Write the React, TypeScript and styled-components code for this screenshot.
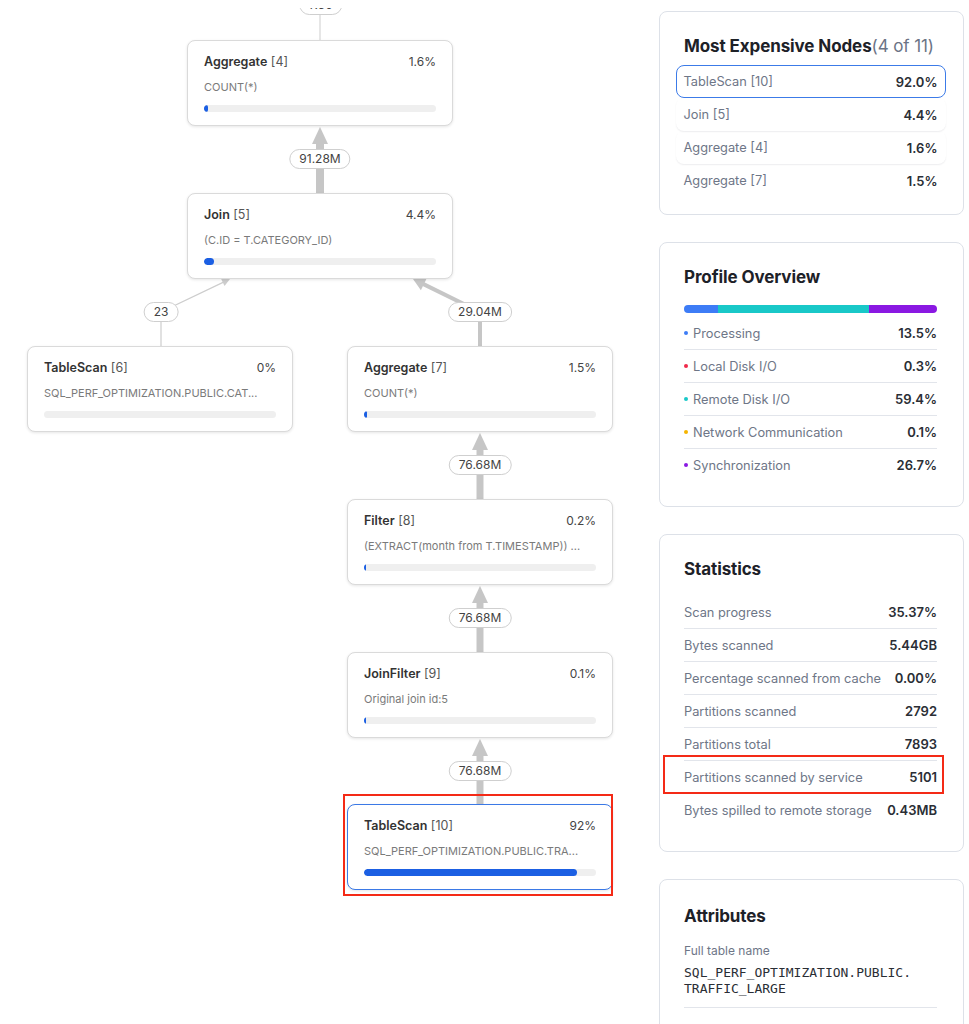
import React from "react";
import styled, { createGlobalStyle } from "styled-components";

const Global = createGlobalStyle`
  html, body { margin: 0; padding: 0; background: #ffffff; }
  body {
    font-family: Inter, "Noto Sans", "Liberation Sans", sans-serif;
    overflow: hidden;
    -webkit-font-smoothing: antialiased;
  }
  #root { width: 969px; height: 1024px; }
`;

const Page = styled.div`
  display: flex;
  width: 969px;
  height: 1024px;
  overflow: hidden;
`;

/* ---------------- Graph canvas ---------------- */

const Canvas = styled.div`
  position: relative;
  flex: 0 0 659px;
  height: 1024px;
  overflow: hidden;
`;

const TopCover = styled.div`
  position: absolute;
  left: 0;
  top: 0;
  width: 100%;
  height: 8px;
  background: #ffffff;
  z-index: 2;
`;

const Edges = styled.svg`
  position: absolute;
  left: 0;
  top: 0;
`;

const NodeCard = styled.div<{ $selected?: boolean }>`
  position: absolute;
  width: 266px;
  box-sizing: border-box;
  background: #ffffff;
  border-radius: 8px;
  border: 1.5px solid ${(p) => (p.$selected ? "#3b79e6" : "#dadada")};
  box-shadow: 0 1px 3px rgba(0, 0, 0, 0.1);
  padding: 13px 16px 13px;
`;

const NodeHead = styled.div`
  display: flex;
  justify-content: space-between;
  align-items: center;
  font-size: 12.5px;
  line-height: 16px;
`;

const NodeName = styled.span`
  font-weight: 600;
  color: #333333;
`;

const NodeId = styled.span`
  font-weight: 400;
  color: #555555;
`;

const NodePct = styled.span`
  color: #444444;
  font-size: 12px;
`;

const NodeDesc = styled.div`
  margin-top: 9px;
  font-size: 11px;
  line-height: 16px;
  color: #7a7a7a;
  white-space: nowrap;
  overflow: hidden;
`;

const Track = styled.div`
  margin-top: 10px;
  height: 7px;
  border-radius: 4px;
  background: #efefef;
  overflow: hidden;
`;

const Fill = styled.div`
  height: 100%;
  border-radius: 4px;
  background: #1b5fe3;
`;

const Pill = styled.div`
  position: absolute;
  transform: translate(-50%, -50%);
  height: 20px;
  box-sizing: border-box;
  padding: 0 9px;
  border: 1px solid #cfcfcf;
  border-radius: 10px;
  background: #ffffff;
  font-size: 12px;
  line-height: 18px;
  color: #444444;
  white-space: nowrap;
`;

const Annotation = styled.div`
  position: absolute;
  box-sizing: border-box;
  border: 2px solid #f42a16;
  pointer-events: none;
`;

/* ---------------- Sidebar ---------------- */

const Sidebar = styled.div`
  flex: 0 0 305px;
  display: flex;
  flex-direction: column;
  gap: 27px;
  padding-top: 11px;
`;

const Card = styled.section<{ $pb: number; $pt?: number }>`
  flex: none;
  box-sizing: border-box;
  border: 1px solid #dde1e8;
  border-radius: 8px;
  padding: ${(p) => p.$pt ?? 23}px 26px ${(p) => p.$pb}px 24px;
`;

const CardTitle = styled.h2<{ $mb: number }>`
  margin: 0 0 ${(p) => p.$mb}px;
  font-size: 17px;
  line-height: 22px;
  font-weight: 700;
  color: #1d2128;
  letter-spacing: -0.1px;
`;

const Muted = styled.span`
  font-weight: 400;
  color: #6b7385;
`;

const NodeRow = styled.div<{ $selected?: boolean }>`
  display: flex;
  justify-content: space-between;
  align-items: center;
  height: 33px;
  box-sizing: border-box;
  margin: 0 -9px 0 -8px;
  padding: 0 7.5px 0 6.5px;
  border-radius: 8px;
  border: 1.5px solid ${(p) => (p.$selected ? "#3c7be8" : "transparent")};
  box-shadow: ${(p) => (p.$selected ? "none" : "0 1px 1.5px rgba(20, 30, 50, 0.08)")};
  &:last-child { box-shadow: none; }
`;

const Label = styled.span`
  color: #6e7687;
  font-size: 12.8px;
  display: inline-flex;
  align-items: center;
  gap: 5px;
`;

const Value = styled.span`
  color: #2a2e35;
  font-size: 13px;
  font-weight: 600;
`;

const ProfileBar = styled.div`
  display: flex;
  height: 8px;
  border-radius: 4px;
  overflow: hidden;
  margin-bottom: 4px;
`;

const Segment = styled.div<{ $color: string }>`
  height: 100%;
  background: ${(p) => p.$color};
`;

const Dot = styled.span<{ $color: string }>`
  width: 4px;
  height: 4px;
  border-radius: 50%;
  background: ${(p) => p.$color};
  flex: none;
`;

const StatRow = styled.div`
  position: relative;
  display: flex;
  justify-content: space-between;
  align-items: center;
  height: 33px;
  box-sizing: border-box;
  border-bottom: 1px solid #e2e5eb;
  &:last-child { border-bottom-color: transparent; }
`;

const RowMark = styled.div`
  position: absolute;
  left: -21px;
  right: -7px;
  top: -6px;
  bottom: -1px;
  border: 2px solid #f42a16;
  pointer-events: none;
`;

const AttrBlock = styled.div`
  padding-bottom: 10px;
  border-bottom: 1px solid #e2e5eb;
  margin-top: 16px;
`;

const AttrLabel = styled.div`
  font-size: 12px;
  line-height: 16px;
  color: #6e7687;
`;

const AttrValue = styled.div`
  margin-top: 6px;
  font-family: "DejaVu Sans Mono", "Liberation Mono", monospace;
  font-size: 13px;
  line-height: 16px;
  color: #2a2e35;
  white-space: pre;
`;

/* ---------------- Data ---------------- */

type GNode = {
  name: string;
  id: number;
  pct: string;
  v: number;
  desc: string;
  x: number;
  y: number;
  selected?: boolean;
};

const nodes: GNode[] = [
  { name: "Aggregate", id: 4, pct: "1.6%", v: 1.6, desc: "COUNT(*)", x: 187, y: 40 },
  { name: "Join", id: 5, pct: "4.4%", v: 4.4, desc: "(C.ID = T.CATEGORY_ID)", x: 187, y: 193 },
  { name: "TableScan", id: 6, pct: "0%", v: 0, desc: "SQL_PERF_OPTIMIZATION.PUBLIC.CAT...", x: 27, y: 346 },
  { name: "Aggregate", id: 7, pct: "1.5%", v: 1.5, desc: "COUNT(*)", x: 347, y: 346 },
  { name: "Filter", id: 8, pct: "0.2%", v: 0.2, desc: "(EXTRACT(month from T.TIMESTAMP)) ...", x: 347, y: 499 },
  { name: "JoinFilter", id: 9, pct: "0.1%", v: 0.1, desc: "Original join id:5", x: 347, y: 652 },
  { name: "TableScan", id: 10, pct: "92%", v: 92, desc: "SQL_PERF_OPTIMIZATION.PUBLIC.TRA...", x: 347, y: 804, selected: true },
];

type Edge = {
  pts: [number, number][];
  w: number;
  arrow: boolean;
  label: string;
  lx: number;
  ly: number;
};

const edges: Edge[] = [
  { pts: [[320, -20], [320, 40]], w: 1, arrow: false, label: "7.50", lx: 321, ly: 5 },
  { pts: [[320, 193], [320, 127]], w: 8, arrow: true, label: "91.28M", lx: 320, ly: 159 },
  { pts: [[161, 346], [161, 312], [230, 279]], w: 1.2, arrow: true, label: "23", lx: 161, ly: 312 },
  { pts: [[480, 346], [480, 312], [413, 279]], w: 4, arrow: true, label: "29.04M", lx: 480, ly: 312 },
  { pts: [[480, 499], [480, 433]], w: 7, arrow: true, label: "76.68M", lx: 480, ly: 465 },
  { pts: [[480, 652], [480, 586]], w: 7, arrow: true, label: "76.68M", lx: 480, ly: 618 },
  { pts: [[480, 804], [480, 739]], w: 7, arrow: true, label: "76.68M", lx: 480, ly: 771 },
];

function headSize(w: number): [number, number] {
  if (w <= 1.5) return [8, 4];
  if (w <= 4) return [12, 6.5];
  return [17, 8];
}

function renderEdge(e: Edge, i: number) {
  const pts = e.pts.map((p) => [...p] as [number, number]);
  let head: string | null = null;
  if (e.arrow) {
    const [tx, ty] = pts[pts.length - 1];
    const [fx, fy] = pts[pts.length - 2];
    const dx = tx - fx;
    const dy = ty - fy;
    const d = Math.hypot(dx, dy);
    const ux = dx / d;
    const uy = dy / d;
    const [len, half] = headSize(e.w);
    const bx = tx - ux * len;
    const by = ty - uy * len;
    const px = -uy;
    const py = ux;
    head = `${tx},${ty} ${bx + px * half},${by + py * half} ${bx - px * half},${by - py * half}`;
    pts[pts.length - 1] = [tx - ux * (len - 2), ty - uy * (len - 2)];
  }
  const d = pts.map((p, k) => `${k === 0 ? "M" : "L"}${p[0]} ${p[1]}`).join(" ");
  const color = e.w <= 1.5 ? "#cdcdcd" : "#c6c6c6";
  return (
    <g key={i}>
      <path d={d} fill="none" stroke={color} strokeWidth={e.w} strokeLinejoin="round" />
      {head && <polygon points={head} fill={color} />}
    </g>
  );
}

const expensive = [
  { label: "TableScan [10]", value: "92.0%", selected: true },
  { label: "Join [5]", value: "4.4%" },
  { label: "Aggregate [4]", value: "1.6%" },
  { label: "Aggregate [7]", value: "1.5%" },
];

const profile = [
  { label: "Processing", value: "13.5%", v: 13.5, color: "#3d7cf6" },
  { label: "Local Disk I/O", value: "0.3%", v: 0.3, color: "#f0294a" },
  { label: "Remote Disk I/O", value: "59.4%", v: 59.4, color: "#19c8c8" },
  { label: "Network Communication", value: "0.1%", v: 0.1, color: "#f5b400" },
  { label: "Synchronization", value: "26.7%", v: 26.7, color: "#8a18e2" },
];

const stats = [
  { label: "Scan progress", value: "35.37%" },
  { label: "Bytes scanned", value: "5.44GB" },
  { label: "Percentage scanned from cache", value: "0.00%" },
  { label: "Partitions scanned", value: "2792" },
  { label: "Partitions total", value: "7893" },
  { label: "Partitions scanned by service", value: "5101", marked: true },
  { label: "Bytes spilled to remote storage", value: "0.43MB" },
];

const BAR_W = 232;
const barTotal = profile.filter((p) => p.v >= 1).reduce((s, p) => s + p.v, 0);

export default function App() {
  return (
    <>
      <Global />
      <Page>
        <Canvas>
          <Edges width={659} height={1024} viewBox="0 0 659 1024">
            {edges.map(renderEdge)}
          </Edges>
          {edges.map((e, i) => (
            <Pill key={i} style={{ left: e.lx, top: e.ly }}>
              {e.label}
            </Pill>
          ))}
          <TopCover />
          {nodes.map((n) => {
            const fw = n.v > 0 ? Math.max((n.v / 100) * BAR_W, 2) : 0;
            return (
              <NodeCard key={n.id} $selected={n.selected} style={{ left: n.x, top: n.y }}>
                <NodeHead>
                  <span>
                    <NodeName>{n.name}</NodeName> <NodeId>[{n.id}]</NodeId>
                  </span>
                  <NodePct>{n.pct}</NodePct>
                </NodeHead>
                <NodeDesc>{n.desc}</NodeDesc>
                <Track>
                  <Fill style={{ width: fw }} />
                </Track>
              </NodeCard>
            );
          })}
          <Annotation style={{ left: 343, top: 794, width: 270, height: 102 }} />
        </Canvas>

        <Sidebar>
          <Card $pb={17}>
            <CardTitle $mb={8}>
              Most Expensive Nodes<Muted>(4 of 11)</Muted>
            </CardTitle>
            {expensive.map((r) => (
              <NodeRow key={r.label} $selected={r.selected}>
                <Label>{r.label}</Label>
                <Value>{r.value}</Value>
              </NodeRow>
            ))}
          </Card>

          <Card $pb={24}>
            <CardTitle $mb={17}>Profile Overview</CardTitle>
            <ProfileBar>
              {profile
                .filter((p) => p.v >= 1)
                .map((p) => (
                  <Segment key={p.label} $color={p.color} style={{ width: `${(p.v / barTotal) * 100}%` }} />
                ))}
            </ProfileBar>
            {profile.map((p) => (
              <StatRow key={p.label}>
                <Label>
                  <Dot $color={p.color} />
                  {p.label}
                </Label>
                <Value>{p.value}</Value>
              </StatRow>
            ))}
          </Card>

          <Card $pb={24}>
            <CardTitle $mb={16}>Statistics</CardTitle>
            {stats.map((s) => (
              <StatRow key={s.label}>
                <Label>{s.label}</Label>
                <Value>{s.value}</Value>
                {s.marked && <RowMark />}
              </StatRow>
            ))}
          </Card>

          <Card $pb={40} $pt={25}>
            <CardTitle $mb={0}>Attributes</CardTitle>
            <AttrBlock>
              <AttrLabel>Full table name</AttrLabel>
              <AttrValue>{"SQL_PERF_OPTIMIZATION.PUBLIC.\nTRAFFIC_LARGE"}</AttrValue>
            </AttrBlock>
          </Card>
        </Sidebar>
      </Page>
    </>
  );
}
